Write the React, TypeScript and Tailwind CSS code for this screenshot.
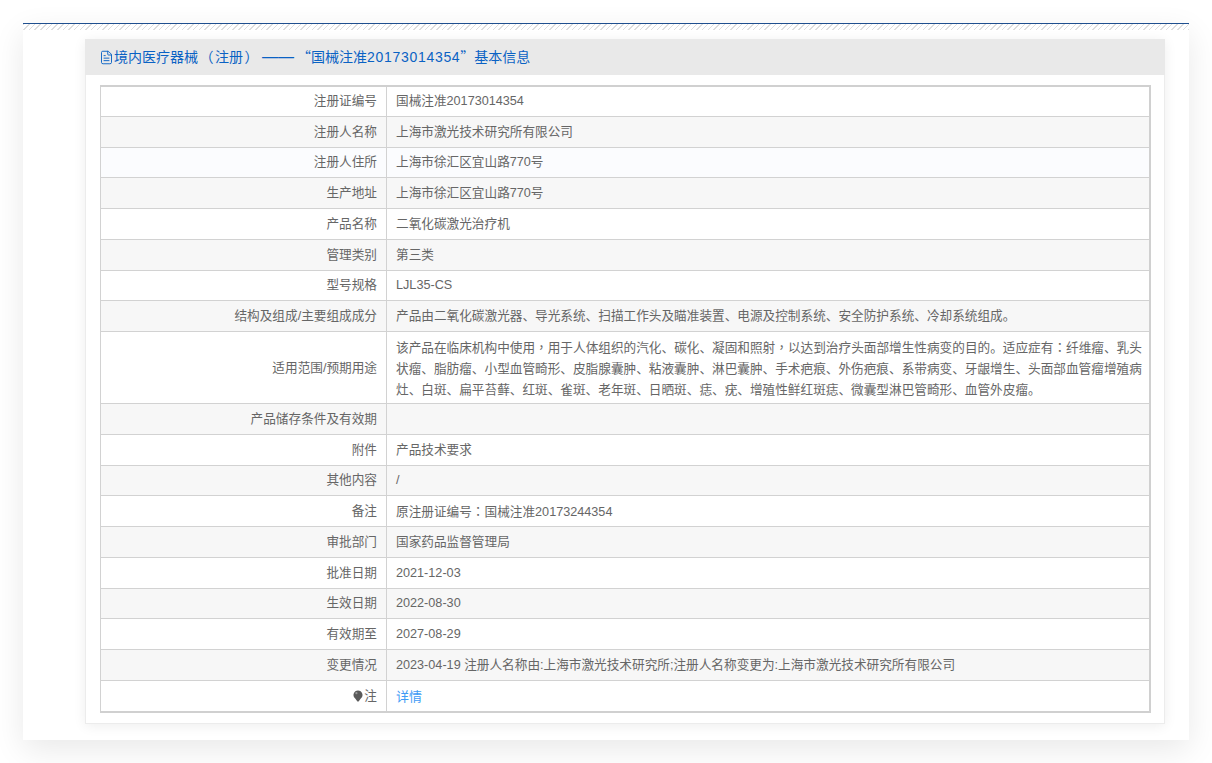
import { Fragment } from "react";
import { FileText } from "lucide-react";

type Row = {
  label: string;
  value: string;
};

const ROWS: Row[] = [
  { label: "注册证编号", value: "国械注准20173014354" },
  { label: "注册人名称", value: "上海市激光技术研究所有限公司" },
  { label: "注册人住所", value: "上海市徐汇区宜山路770号" },
  { label: "生产地址", value: "上海市徐汇区宜山路770号" },
  { label: "产品名称", value: "二氧化碳激光治疗机" },
  { label: "管理类别", value: "第三类" },
  { label: "型号规格", value: "LJL35-CS" },
  {
    label: "结构及组成/主要组成成分",
    value: "产品由二氧化碳激光器、导光系统、扫描工作头及瞄准装置、电源及控制系统、安全防护系统、冷却系统组成。",
  },
  {
    label: "适用范围/预期用途",
    value:
      "该产品在临床机构中使用，用于人体组织的汽化、碳化、凝固和照射，以达到治疗头面部增生性病变的目的。适应症有：纤维瘤、乳头状瘤、脂肪瘤、小型血管畸形、皮脂腺囊肿、粘液囊肿、淋巴囊肿、手术疤痕、外伤疤痕、系带病变、牙龈增生、头面部血管瘤增殖病灶、白斑、扁平苔藓、红斑、雀斑、老年斑、日晒斑、痣、疣、增殖性鲜红斑痣、微囊型淋巴管畸形、血管外皮瘤。",
  },
  { label: "产品储存条件及有效期", value: "" },
  { label: "附件", value: "产品技术要求" },
  { label: "其他内容", value: "/" },
  { label: "备注", value: "原注册证编号：国械注准20173244354" },
  { label: "审批部门", value: "国家药品监督管理局" },
  { label: "批准日期", value: "2021-12-03" },
  { label: "生效日期", value: "2022-08-30" },
  { label: "有效期至", value: "2027-08-29" },
  {
    label: "变更情况",
    value: "2023-04-19 注册人名称由:上海市激光技术研究所;注册人名称变更为:上海市激光技术研究所有限公司",
  },
];

const CJK = "font-['Noto_Sans_CJK_SC',sans-serif]";
const CENTERED = "font-['Noto_Sans_CJK_TC',sans-serif]";

function rowColor(i: number) {
  if (i === 2) return "bg-[#fbfcfe]";
  return i % 2 === 1 ? "bg-[#f7f7f7]" : "bg-white";
}

// comma and colon sit centred in the cell of the character in the picture
function Value({ text }: { text: string }) {
  const parts = text.split(/([，：])/);
  return (
    <>
      {parts.map((part, i) =>
        part === "，" || part === "：" ? (
          <span key={i} className={CENTERED}>
            {part}
          </span>
        ) : (
          <Fragment key={i}>{part}</Fragment>
        ),
      )}
    </>
  );
}

function Bulb() {
  return (
    <svg viewBox="0 0 10 12" className="mr-px inline-block h-[12px] w-[10px] align-[-2px]">
      <path d="M5 0.5a4.5 4.5 0 0 1 2.8 8L5.6 11.5H4.4L2.2 8.5A4.5 4.5 0 0 1 5 0.5z" fill="#5a5a5a" />
      <circle cx="3.4" cy="3.2" r="1.1" fill="#9a9a9a" />
    </svg>
  );
}

function Paren({ children }: { children: string }) {
  return <span className={`inline-block w-[17px] text-center ${CENTERED}`}>{children}</span>;
}

export default function App() {
  return (
    <div className="min-h-[763px] bg-white pt-[23px] pl-[23px] font-['Liberation_Sans','Noto_Sans_CJK_SC',sans-serif] text-[12.65px] text-[#666]">
      <div className="h-[717px] w-[1166px] border-t border-[#1f4f8f] bg-white shadow-[0_10px_30px_rgba(0,0,0,0.09)]">
        <div className="h-[6px] bg-[repeating-linear-gradient(135deg,#dedede_0,#dedede_1px,#ffffff_1px,#ffffff_4px)]" />
        <div className="mx-[62px] mt-[9px] h-[685px] w-[1080px] border-r border-b border-l border-[#ececec] bg-white shadow-[0_2px_12px_rgba(0,0,0,0.07)]">
          <div className="-mx-px flex h-[36px] items-center bg-[#e9e9e9] pl-[15px] text-[14px] whitespace-pre text-[#0a62c4]">
            <FileText size={15} strokeWidth={1.5} className="-ml-px shrink-0" />
            <span>
              <span className={CJK}>境内医疗器械</span>
              <Paren>（</Paren>
              <span className={CJK}>注册</span>
              <Paren>）</Paren>
              <span className="mr-[3px] ml-[2px] inline-block w-[32px] text-[16px] leading-none">——</span>
              <span className={CJK}>“国械注准</span>
              <span className="tracking-[0.7px]">20173014354</span>
              <span className={CJK}>”基本信息</span>
            </span>
          </div>
          <div className="px-[14px] pt-[9.5px]">
            <table className="w-[1051px] table-fixed border-collapse border-t-2 border-r-2 border-b-2 border-l border-[#d0d0d0]">
              <tbody>
                {ROWS.map((row, i) => (
                  <tr key={row.label} className={rowColor(i)}>
                    <td
                      className={`w-[286px] border border-[#d2d2d2] pt-px pr-[9px] text-right align-middle leading-[21px] ${
                        row.value.length > 100 ? "h-[72px]" : "h-[30.75px]"
                      }`}
                    >
                      {row.label}
                    </td>
                    <td className="border border-[#d2d2d2] pt-px pr-[3px] pl-[9px] align-middle leading-[21px]">
                      <Value text={row.value} />
                    </td>
                  </tr>
                ))}
                <tr className="bg-white">
                  <td className="h-[31.5px] border border-[#d2d2d2] pt-px pr-[9px] text-right">
                    <Bulb />注
                  </td>
                  <td className="border border-[#d2d2d2] pt-px pl-[9px] text-[13px] text-[#3f9bf5]">详情</td>
                </tr>
              </tbody>
            </table>
          </div>
        </div>
      </div>
    </div>
  );
}
